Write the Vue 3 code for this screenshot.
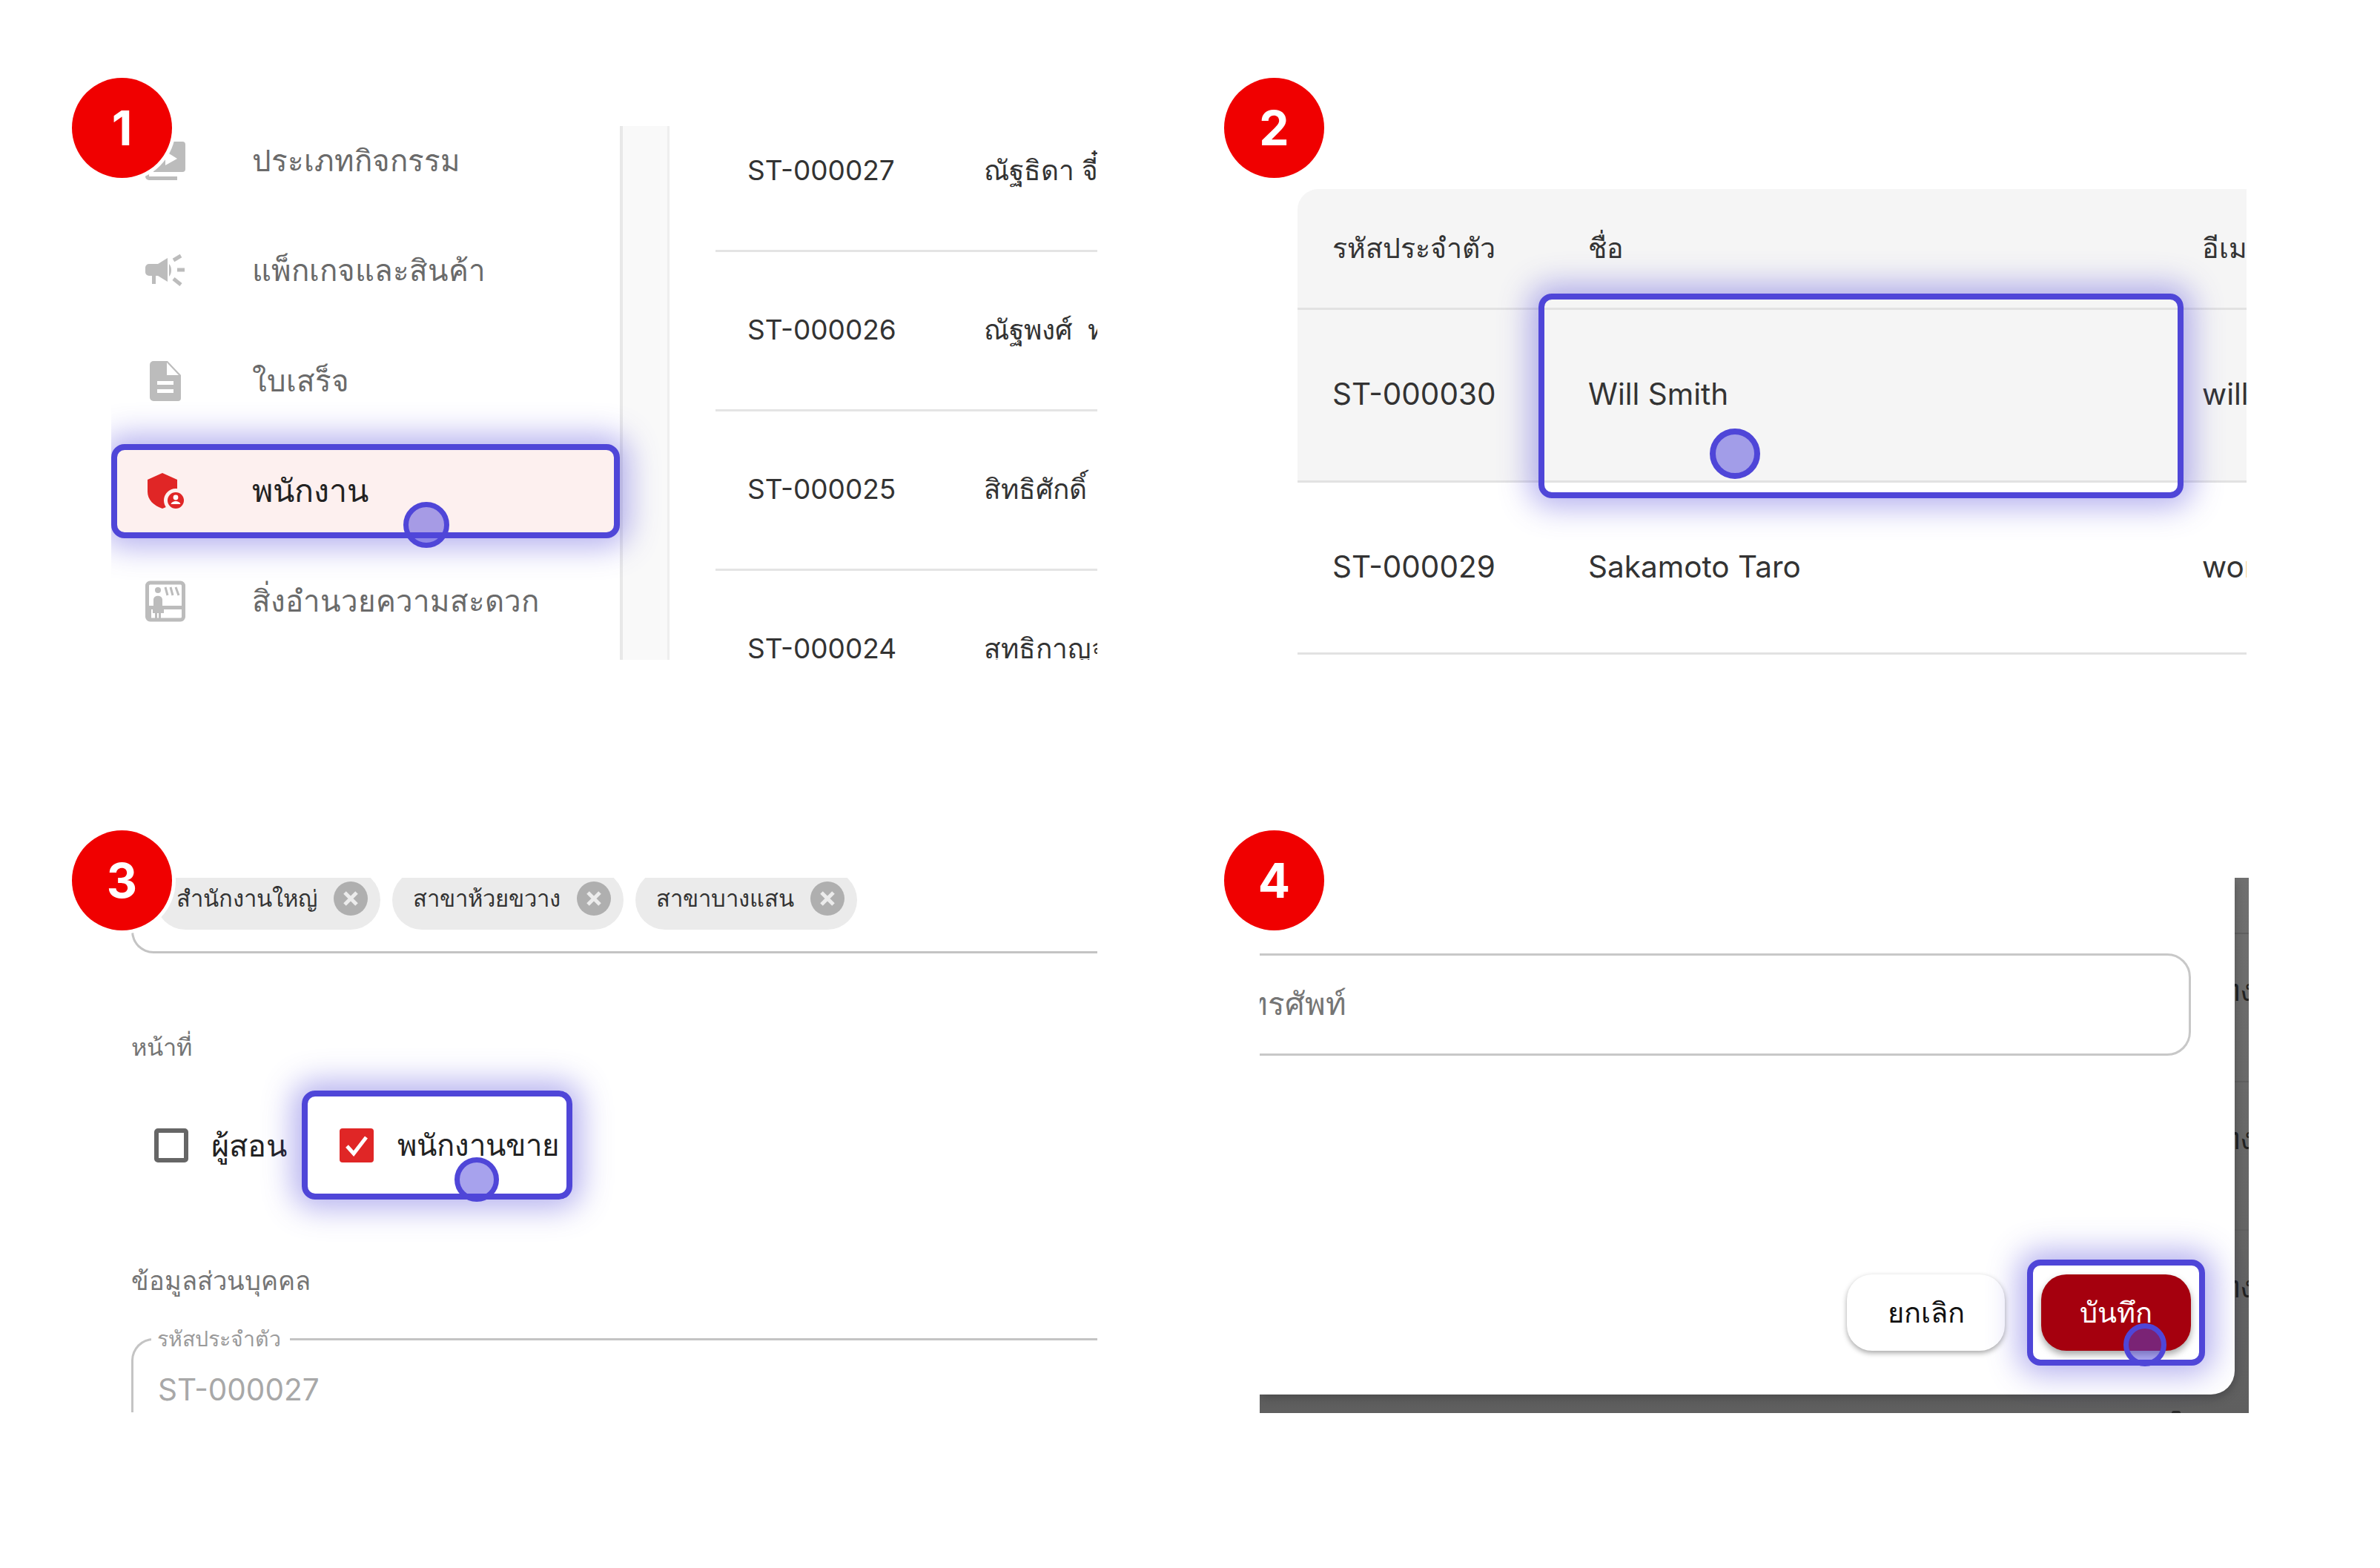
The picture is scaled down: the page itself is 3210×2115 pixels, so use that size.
<script setup>
const menu = [
  { label: 'ประเภทกิจกรรม', icon: 'play' },
  { label: 'แพ็กเกจและสินค้า', icon: 'horn' },
  { label: 'ใบเสร็จ', icon: 'doc' },
  { label: 'พนักงาน', icon: 'shield', active: true },
  { label: 'สิ่งอำนวยความสะดวก', icon: 'room' }
]
const staff = [
  ['ST-000027', 'ณัฐธิดา จี๋'],
  ['ST-000026', 'ณัฐพงศ์\u00a0\u00a0ทอง'],
  ['ST-000025', 'สิทธิศักดิ์'],
  ['ST-000024', 'สุทธิกาญจนา']
]
const chips = ['สำนักงานใหญ่', 'สาขาห้วยขวาง', 'สาขาบางแสน']
const people = [
  { id: 'ST-000030', name: 'Will Smith', mail: 'will', hover: true },
  { id: 'ST-000029', name: 'Sakamoto Taro', mail: 'worawit' }
]
</script>

<template>
  <main class="page">
    <section class="quad">
      <div class="panel panel-a">
        <nav class="side">
          <div v-for="m in menu" :key="m.label" class="item" :class="{ active: m.active }">
            <svg class="ico" viewBox="0 0 54 56">
              <template v-if="m.icon === 'play'">
                <path fill="#bcbcbc" d="M15 2h35a4 4 0 0 1 4 4v33a4 4 0 0 1-4 4H11V6a4 4 0 0 1 4-4zM0 34h5v15h38v5H5a5 5 0 0 1-5-5z" />
                <path fill="#fff" d="M27 15l16 10-16 9z" />
              </template>
              <template v-else-if="m.icon === 'horn'">
                <path fill="#bcbcbc" d="M5 19h12l13-8v32l-13-8h-3v11H9V35H5a5 5 0 0 1-5-5v-6a5 5 0 0 1 5-5zM32 19c4 4 4 13 0 17z" />
                <path stroke="#bcbcbc" stroke-width="5" fill="none" d="M38 14l10-6M43 27h10M38 39l10 8" />
              </template>
              <template v-else-if="m.icon === 'doc'">
                <path fill="#bcbcbc" d="M11 1h19l18 19v31a4 4 0 0 1-4 4H11a5 5 0 0 1-5-5V6a5 5 0 0 1 5-5z" />
                <path fill="#fff" d="M29 3l16 17H29zM16 28h22v5H16zM16 39h22v5H16z" />
              </template>
              <template v-else-if="m.icon === 'shield'">
                <path fill="#e02626" d="M23 4l20 9v16c0 11-8 19-20 23C11 48 3 40 3 29V13z" />
                <circle cx="41" cy="41" r="16" fill="#fdf0ef" />
                <circle cx="41" cy="41" r="11" fill="#e02626" />
                <circle cx="41" cy="37" r="3.4" fill="#fff" />
                <path fill="#fff" d="M34.500 46c1-3 4-4 6.500-4s5.500 1 6.500 4z" />
              </template>
              <template v-else>
                <rect x="2.500" y="3" width="49" height="50" rx="4" fill="none" stroke="#bcbcbc" stroke-width="5" />
                <circle cx="17" cy="13" r="4" fill="#bcbcbc" />
                <path fill="#bcbcbc" d="M11 34v-8c0-7 12-7 12 0v8h29v5H25v5h-4v8h-3v-8h-2v8h-3v-8H10v-5H2v-5zM8 39v14H3V39z" />
                <path stroke="#bcbcbc" stroke-width="3" fill="none" d="M27 9l3 11M34 9l3 11M41 9l4 11" />
              </template>
            </svg>
            <span class="item-text">{{ m.label }}</span>
            <i v-if="m.active" class="dot dot-a"></i>
          </div>
        </nav>
        <div class="strip"></div>
        <div class="list">
          <div v-for="s in staff" :key="s[0]" class="list-row">
            <span class="list-id">{{ s[0] }}</span>
            <span class="list-name">{{ s[1] }}</span>
          </div>
        </div>
      </div>
      <div class="badge">1</div>
    </section>

    <section class="quad">
      <div class="panel panel-b">
        <div class="t-row t-head">
          <span class="c1">รหัสประจำตัว</span><span class="c2">ชื่อ</span><span class="c3">อีเมล</span>
        </div>
        <div v-for="p in people" :key="p.id" class="t-row t-body" :class="{ hover: p.hover }">
          <span class="c1">{{ p.id }}</span><span class="c2">{{ p.name }}</span><span class="c3">{{ p.mail }}</span>
        </div>
        <div class="hl hl-b"><i class="dot dot-b"></i></div>
      </div>
      <div class="badge badge-right">2</div>
    </section>

    <section class="quad">
      <div class="panel panel-c">
        <div class="chips">
          <span v-for="c in chips" :key="c" class="chip">
            <span>{{ c }}</span>
            <svg class="chip-x" viewBox="0 0 46 46">
              <circle cx="23" cy="23" r="23" fill="#afafaf" />
              <path d="M15 15l16 16M31 15L15 31" stroke="#ececec" stroke-width="5" />
            </svg>
          </span>
        </div>
        <p class="cap cap-role">หน้าที่</p>
        <div class="checks">
          <span class="box"></span>
          <span class="check-text check-first">ผู้สอน</span>
          <div class="hl hl-c">
            <svg class="tick" viewBox="0 0 46 46">
              <rect width="46" height="46" rx="4" fill="#e02626" />
              <path d="M10 24l9 10 17-22" fill="none" stroke="#fff" stroke-width="5" />
            </svg>
            <span class="check-text">พนักงานขาย</span>
            <i class="dot dot-c"></i>
          </div>
        </div>
        <p class="cap cap-info">ข้อมูลส่วนบุคคล</p>
        <div class="field">
          <span class="legend">รหัสประจำตัว</span>
          <span class="field-value">ST-000027</span>
        </div>
      </div>
      <div class="badge">3</div>
    </section>

    <section class="quad">
      <div class="panel panel-d">
        <div class="back">
          <div class="back-row back-first"></div>
          <div class="back-row"><span>ทั้งหมด ทง</span></div>
          <div class="back-row"><span>ทั้งหมด ทง</span></div>
          <div class="back-row"><span>ทั้งหมด ทง</span></div>
        </div>
        <i class="speck"></i>
        <div class="modal">
          <div class="input"><span class="input-label"><span>เบอร์โทรศัพท์</span></span></div>
          <div class="actions">
            <button class="btn btn-cancel">ยกเลิก</button>
            <div class="hl hl-d">
              <button class="btn btn-save">บันทึก</button>
              <i class="dot dot-d"></i>
            </div>
          </div>
        </div>
      </div>
      <div class="badge badge-right">4</div>
    </section>
  </main>
</template>

<style scoped>
.page {
  width: 3210px;
  height: 2115px;
  display: grid;
  grid-template-columns: 1553px 1657px;
  grid-template-rows: 1015px 1100px;
  background: #fff;
  overflow: hidden;
  font-family: Inter, "Noto Sans", sans-serif;
  color: #333;
}
.quad { position: relative; }
.panel { overflow: hidden; position: relative; }
.badge {
  position: absolute;
  left: 97px;
  top: 105px;
  width: 135px;
  height: 135px;
  border-radius: 50%;
  background: #f00000;
  box-shadow: 0 0 0 5px #fff;
  color: #fff;
  font: 700 64px/135px Inter, sans-serif;
  text-align: center;
}
.badge-right { left: 98px; }
.hl {
  box-sizing: border-box;
  border: 8px solid #4f46d8;
  border-radius: 18px;
  box-shadow: 0 0 40px 12px rgba(79, 70, 216, 0.42);
  position: relative;
}
.dot {
  position: absolute;
  box-sizing: border-box;
  width: 62px;
  height: 62px;
  border: 7px solid #4f46d8;
  border-radius: 50%;
  background: rgba(79, 70, 220, 0.5);
}

/* panel 1 */
.panel-a {
  margin: 170px 0 0 150px;
  width: 1330px;
  height: 720px;
  display: flex;
}
.side {
  flex: none;
  box-sizing: border-box;
  width: 690px;
  border-right: 4px solid #e8e8e8;
  margin-top: -17px;
  display: flex;
  flex-direction: column;
  gap: 21.5px;
}
.item {
  box-sizing: border-box;
  height: 127px;
  flex: none;
  display: flex;
  align-items: center;
  padding-left: 46px;
  gap: 90px;
  font-size: 40.250px;
  color: #6a6a6a;
  position: relative;
}
.item.active {
  border: 8px solid #4f46d8;
  border-radius: 18px;
  background: #fdf0ef;
  box-shadow: 0 0 40px 12px rgba(79, 70, 216, 0.42);
  padding-left: 38px;
  font-size: 43px;
  color: #222;
  z-index: 2;
}
.ico { width: 54px; height: 56px; flex: none; }
.dot-a { left: 386px; top: 70px; }
.strip {
  flex: none;
  width: 60px;
  background: #f9f9f9;
  border-right: 3px solid #eee;
}
.list {
  flex: none;
  width: 515px;
  margin: -45px 0 0 62px;
}
.list-row {
  box-sizing: border-box;
  height: 215px;
  border-bottom: 3px solid #e4e4e4;
  display: flex;
  align-items: center;
  font-size: 37px;
  padding: 0 0 3px 43px;
  white-space: nowrap;
  overflow: hidden;
}
.list-id { flex: none; width: 319px; }

/* panel 2 */
.panel-b {
  margin: 255px 0 0 197px;
  width: 1280px;
  height: 635px;
}
.t-row {
  box-sizing: border-box;
  display: flex;
  align-items: center;
  font-size: 40.500px;
  border-bottom: 3px solid #e2e2e2;
  white-space: nowrap;
  overflow: hidden;
}
.t-head { height: 163px; background: #f5f5f5; border-top-left-radius: 28px; font-size: 37.500px; }
.t-body { height: 232px; padding-bottom: 3px; }
.hover { height: 233px; background: #f5f5f5; }
.c1 { flex: none; width: 392px; padding-left: 47px; box-sizing: border-box; }
.c2 { flex: none; width: 828px; }
.c3 { flex: none; }
.hl-b {
  position: absolute;
  left: 325px;
  top: 141px;
  width: 870px;
  height: 276px;
}
.dot-b { width: 68px; height: 68px; border-width: 8px; left: 223px; top: 174px; }

/* panel 3 */
.panel-c {
  margin: 169px 0 0 177px;
  width: 1303px;
  height: 721px;
}
.chips {
  box-sizing: border-box;
  height: 102px;
  border-left: 3px solid #c4c4c4;
  border-bottom: 3px solid #c4c4c4;
  border-bottom-left-radius: 30px;
  display: flex;
  gap: 16px;
  align-items: flex-start;
  padding-left: 30px;
}
.chip {
  box-sizing: border-box;
  height: 80px;
  margin-top: -10px;
  border-radius: 40px;
  background: #ebebeb;
  display: flex;
  align-items: center;
  gap: 22px;
  padding: 0 17px 4px 28px;
  font-size: 31px;
}
.chip-x { width: 46px; height: 46px; flex: none; }
.cap { margin: 0; font-size: 34.500px; line-height: 50px; color: #757575; }
.cap-role { margin-top: 102px; font-size: 32.500px; }
.cap-info { margin-top: 85px; }
.checks {
  margin-top: 33px;
  height: 147px;
  display: flex;
  align-items: center;
  padding-left: 31px;
}
.box {
  box-sizing: border-box;
  width: 46px;
  height: 46px;
  border: 6px solid #666;
  border-radius: 5px;
  flex: none;
  margin-right: 31px;
}
.check-text { font-size: 40px; color: #222; white-space: nowrap; }
.check-first { flex: none; width: 122px; font-size: 41.500px; }
.hl-c {
  flex: none;
  width: 365px;
  height: 147px;
  display: flex;
  align-items: center;
  gap: 32px;
  padding-left: 43px;
}
.tick { width: 46px; height: 46px; flex: none; }
.dot-c { left: 198px; top: 82px; width: 60px; height: 60px; }
.field {
  box-sizing: border-box;
  height: 150px;
  margin-top: 52px;
  border-top: 3px solid #c4c4c4;
  border-left: 3px solid #c4c4c4;
  border-top-left-radius: 30px;
  padding: 43px 0 0 33px;
  position: relative;
}
.legend {
  position: absolute;
  left: 24px;
  top: -22px;
  padding: 0 12px 0 8px;
  background: #fff;
  font-size: 28.500px;
  line-height: 40px;
  color: #9a9a9a;
}
.field-value { font-size: 40.500px; line-height: 48px; color: #a8a8a8; }

/* panel 4 */
.panel-d {
  margin: 169px 0 0 146px;
  width: 1334px;
  height: 722px;
  background: linear-gradient(#707070, #5f5f5f);
}
.back-row {
  box-sizing: border-box;
  height: 200px;
  border-bottom: 2px solid #606060;
  display: flex;
  justify-content: flex-end;
  align-items: center;
  padding-bottom: 46px;
  overflow: hidden;
  font-size: 40px;
  color: #222;
  white-space: nowrap;
}
.back-row span { margin-right: -8px; }
.back-first { height: 76px; padding: 0; }
.speck {
  position: absolute;
  left: 1230px;
  bottom: 0;
  width: 12px;
  height: 3px;
  background: #2a2a2a;
  border-radius: 6px 6px 0 0;
}
.modal {
  position: absolute;
  left: 0;
  top: 0;
  right: 19px;
  bottom: 25px;
  background: #fff;
  border-bottom-right-radius: 32px;
  box-shadow: 0 4px 14px rgba(0, 0, 0, 0.25);
  display: flex;
  flex-direction: column;
  padding: 102px 40px 39px 0;
  box-sizing: border-box;
}
.input {
  box-sizing: border-box;
  height: 138px;
  margin-left: -60px;
  margin-right: 19px;
  border: 3px solid #c8c8c8;
  border-radius: 32px;
  display: flex;
  align-items: center;
  flex: none;
  padding-bottom: 3px;
}
.input-label {
  width: 174px;
  display: flex;
  justify-content: flex-end;
  white-space: nowrap;
  font-size: 42px;
  color: #757575;
}
.actions {
  margin-top: auto;
  display: flex;
  justify-content: flex-end;
  align-items: center;
  gap: 30px;
}
.btn {
  border: 0;
  height: 103px;
  border-radius: 34px;
  font-family: inherit;
  font-size: 38px;
  padding: 0;
}
.btn-cancel {
  width: 213px;
  background: #fff;
  color: #111;
  box-shadow: 0 3px 7px rgba(0, 0, 0, 0.35);
}
.btn-save {
  width: 202px;
  background: #a5000e;
  color: #fff;
  box-shadow: 0 5px 10px rgba(0, 0, 0, 0.35);
}
.hl-d {
  box-sizing: border-box;
  width: 240px;
  height: 143px;
  padding: 12px 11px;
  background: #fff;
}
.dot-d { left: 122px; top: 78px; width: 58px; height: 58px; }
</style>
